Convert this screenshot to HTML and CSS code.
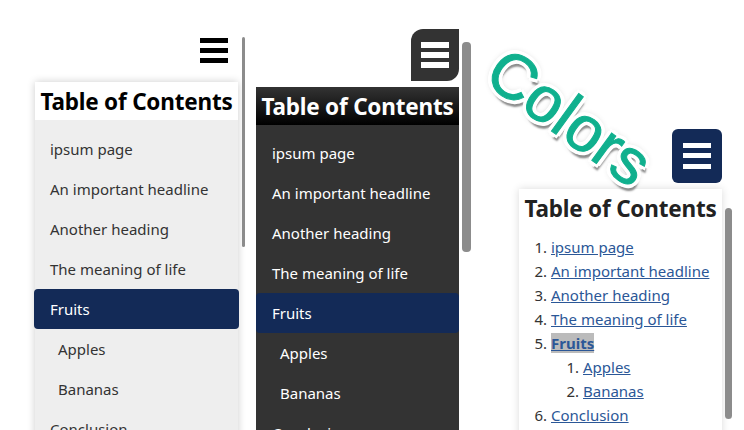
FILE: index.html
```html
<!DOCTYPE html>
<html lang="en">
<head>
<meta charset="utf-8">
<title>Table of Contents</title>
<link rel="stylesheet" href="styles.css">
</head>
<body>
<main class="page">
  <section class="col col-light">
    <button class="toggle toggle-light" aria-label="Menu"><svg width="28" height="25" viewBox="0 0 28 25"><path d="M0 0h28v5H0zM0 10h28v5H0zM0 20h28v5H0z"/></svg></button>
    <nav class="toc toc-light">
      <h2 class="toc-title">Table of Contents</h2>
      <ul class="menu">
        <li class="item">ipsum page</li>
        <li class="item">An important headline</li>
        <li class="item">Another heading</li>
        <li class="item">The meaning of life</li>
        <li class="item active">Fruits</li>
        <li class="item sub">Apples</li>
        <li class="item sub">Bananas</li>
        <li class="item">Conclusion</li>
      </ul>
    </nav>
    <span class="bar bar-one"></span>
  </section>
  <section class="col col-dark">
    <button class="toggle toggle-dark" aria-label="Menu"><svg width="28" height="26" viewBox="0 0 28 26"><path d="M0 0h28v6H0zM0 10h28v6H0zM0 20h28v6H0z"/></svg></button>
    <nav class="toc toc-dark">
      <h2 class="toc-title">Table of Contents</h2>
      <ul class="menu">
        <li class="item">ipsum page</li>
        <li class="item">An important headline</li>
        <li class="item">Another heading</li>
        <li class="item">The meaning of life</li>
        <li class="item active">Fruits</li>
        <li class="item sub">Apples</li>
        <li class="item sub">Bananas</li>
        <li class="item">Conclusion</li>
      </ul>
    </nav>
    <span class="bar bar-two"></span>
  </section>
  <section class="col col-plain">
    <div class="colors">Colors</div>
    <button class="toggle toggle-navy" aria-label="Menu"><svg width="28" height="26" viewBox="0 0 28 26"><path d="M0 0h28v5H0zM0 10h28v5H0zM0 21h28v5H0z"/></svg></button>
    <nav class="toc toc-plain">
      <h2 class="toc-title">Table of Contents</h2>
      <ol class="list">
        <li><a href="#a">ipsum page</a></li>
        <li><a href="#b">An important headline</a></li>
        <li><a href="#c">Another heading</a></li>
        <li><a href="#d">The meaning of life</a></li>
        <li><a href="#e" class="current">Fruits</a>
          <ol class="list nested">
            <li><a href="#f">Apples</a></li>
            <li><a href="#g">Bananas</a></li>
          </ol>
        </li>
        <li><a href="#h">Conclusion</a></li>
      </ol>
    </nav>
    <span class="bar bar-three"></span>
  </section>
</main>
</body>
</html>
```
FILE: styles.css
```css
* { box-sizing: border-box; }
html, body { margin: 0; height: 430px; overflow: hidden; background: #fff; }
body { font-family: "Noto Sans", "Open Sans", sans-serif; color: #333; }
.page { display: flex; height: 430px; overflow: hidden; }
.col { position: relative; display: flex; flex-direction: column; align-items: flex-end; height: 430px; }
.col-light { width: 245px; padding: 0 7px 0 35px; }
.col-dark { width: 227px; padding: 29px 13px 0 11px; }
.col-plain { width: 272px; padding: 129px 22px 0 47px; }
.toggle { display: flex; align-items: center; justify-content: center; border: 0; padding: 0; width: 48px; flex: none; }
.toggle-light { height: 52px; margin-top: 24px; background: #fff; }
.toggle-dark { height: 52px; background: #333; border-radius: 12px 0 12px 0; }
.toggle-dark svg, .toggle-navy svg { fill: #fff; }
.toggle-navy { width: 50px; height: 54px; background: #132a57; border-radius: 6px; }
.toc { width: 100%; height: 400px; flex: none; }
.toc-light { margin-top: 6px; background: #eee; box-shadow: 0 0 8px rgba(0,0,0,.2); }
.toc-dark { margin-top: 6px; background: #333; color: #fff; }
.toc-plain { margin-top: 6px; background: #fff; box-shadow: 0 0 8px rgba(0,0,0,.15); }
.toc-title { margin: 0; height: 38px; font-size: 22.500px; line-height: 40px; font-weight: 700; text-align: center; white-space: nowrap; letter-spacing: -.2px; }
.toc-light .toc-title { background: #fff; color: #000; }
.toc-dark .toc-title { background: linear-gradient(#333, #000); color: #fff; }
.toc-plain .toc-title { color: #222; }
.menu { list-style: none; margin: 0; padding: 9px 0 0; }
.toc-dark .menu { padding-top: 8px; }
.item { height: 40px; padding-left: 15px; font-size: 15px; line-height: 40px; white-space: nowrap; }
.toc-dark .item { padding-left: 16px; }
.item.sub, .toc-dark .item.sub { padding-left: 24px; }
.toc-light .item.sub { padding-left: 23px; }
.item.active { background: #132a57; color: #fff; border-radius: 4px; }
.toc-light .item.active { margin: 0 -1px; padding-left: 16px; }
.list { margin: 0; padding: 8px 0 0 32px; font-size: 15px; line-height: 24px; }
.list.nested { padding: 0 0 0 32px; }
.list a { color: #2b5797; }
.current { font-weight: 700; background: #bbb; }
.bar { position: absolute; background: #8c8c8c; border-radius: 4px; }
.bar-one { left: 242px; top: 37px; width: 3px; height: 210px; }
.bar-two { left: 217px; top: 42px; width: 9px; height: 210px; }
.bar-three { left: 253px; top: 208px; width: 7px; height: 211px; }
.colors { position: absolute; left: 5px; top: 85px; font-family: "Liberation Sans", Arial, sans-serif; font-size: 64px; line-height: 64px; color: #10b08e; -webkit-text-stroke: 1px #10b08e; transform: rotate(36deg); white-space: nowrap; text-shadow: 4px 0 #fff, -4px 0 #fff, 0 4px #fff, 0 -4px #fff, 3px 3px #fff, -3px -3px #fff, 3px -3px #fff, -3px 3px #fff, 0 0 7px #999, 5px 5px 2px #8a8a8a; }
```
